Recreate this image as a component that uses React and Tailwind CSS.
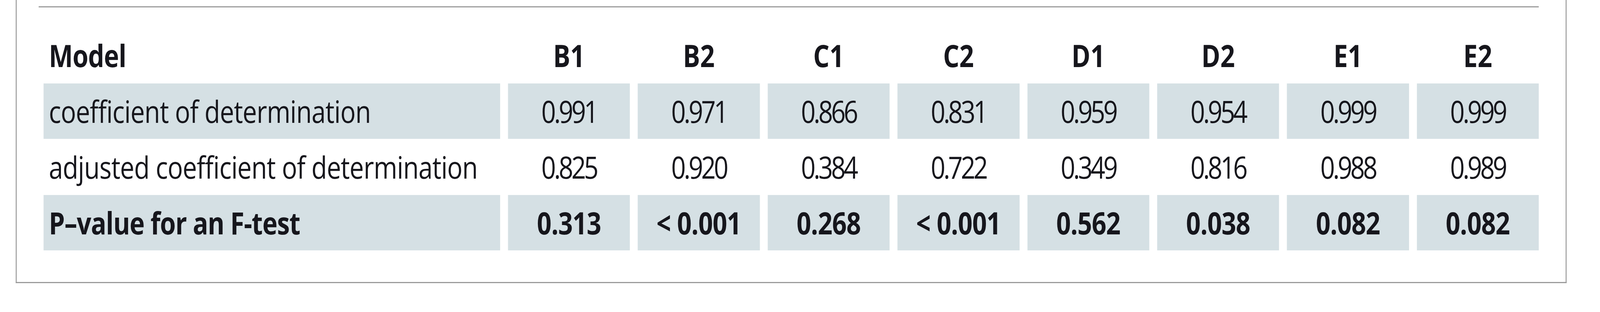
import { useState } from "react";

const columns = ["B1", "B2", "C1", "C2", "D1", "D2", "E1", "E2"];

const rows = [
  {
    label: "coefficient of determination",
    values: ["0.991", "0.971", "0.866", "0.831", "0.959", "0.954", "0.999", "0.999"],
    shaded: true,
    bold: false,
  },
  {
    label: "adjusted coefficient of determination",
    values: ["0.825", "0.920", "0.384", "0.722", "0.349", "0.816", "0.988", "0.989"],
    shaded: false,
    bold: false,
  },
  {
    label: "P–value for an F-test",
    values: ["0.313", "< 0.001", "0.268", "< 0.001", "0.562", "0.038", "0.082", "0.082"],
    shaded: true,
    bold: true,
  },
];

export default function App() {
  // the table is laid out at 4885px; squeeze it horizontally if the window is narrower
  const [sx] = useState(() => Math.min(1, window.innerWidth / 4885));

  return (
    <div
      className="h-[800px] w-screen overflow-hidden bg-white text-[#16161c]"
      style={{ fontFamily: '"Open Sans", "Noto Sans", sans-serif' }}
    >
      <div className="w-[4885px] origin-top-left" style={{ transform: `scaleX(${sx})` }}>
        <div className="ml-[48px] w-[4735px] border-x-[3px] border-b-[3px] border-[#9b9b9b] pl-[67px] pr-[82px] pt-[16px] pb-[81px]">
          <div className="h-[3px] bg-[#9d9d9d]" />

          <div className="ml-[15px] mt-[52px] grid grid-cols-[1394px_repeat(8,1fr)] gap-x-[24px] gap-y-[1px] text-[78px] leading-[142px]">
            <div className="h-[142px] pl-[16px] font-bold tracking-[-1px]">Model</div>
            {columns.map((c) => (
              <div key={c} className="h-[142px] text-center font-bold">
                {c}
              </div>
            ))}

            {rows.map((row) => (
              <Row key={row.label} row={row} />
            ))}
          </div>
        </div>
      </div>
    </div>
  );
}

function Row({ row }) {
  const bg = row.shaded ? "bg-[#d5e0e4]" : "bg-white";
  return (
    <>
      <div
        className={`h-[142px] whitespace-nowrap pl-[16px] ${bg} ${
          row.bold ? "font-bold tracking-[-1.3px]" : "tracking-[-1px]"
        }`}
      >
        {row.label}
      </div>
      {row.values.map((v, i) => (
        <div
          key={i}
          className={`h-[142px] whitespace-nowrap text-center ${bg} ${
            row.bold ? "font-bold tracking-[-1px]" : "tracking-[-6px]"
          }`}
        >
          {v}
        </div>
      ))}
    </>
  );
}
